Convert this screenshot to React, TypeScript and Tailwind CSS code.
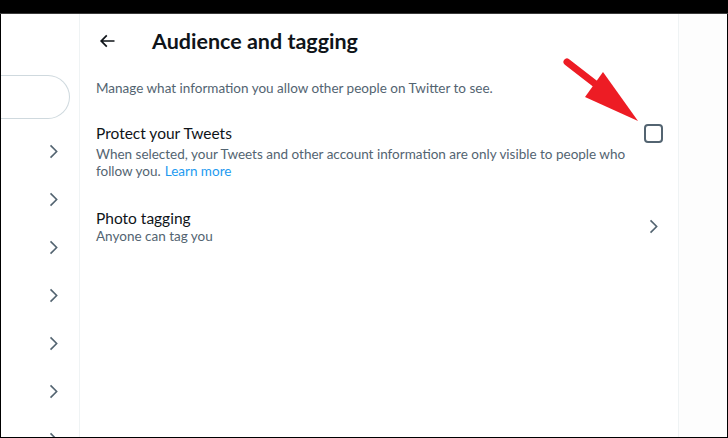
import React from "react";

const font = { fontFamily: 'Lato, "Noto Sans", Arial, sans-serif' };

function Chevron({ className = "" }: { className?: string }) {
  return (
    <svg viewBox="0 0 24 24" className={className} fill="#536471">
      <path d="M14.586 12L7.543 4.96l1.414-1.42L17.414 12l-8.457 8.46-1.414-1.42L14.586 12z" />
    </svg>
  );
}

function BackArrow() {
  return (
    <svg viewBox="0 0 24 24" className="h-5 w-5" fill="#0f1419">
      <path d="M7.414 13l5.043 5.04-1.414 1.42L3.586 12l7.457-7.46 1.414 1.42L7.414 11H21v2H7.414z" />
    </svg>
  );
}

function RedArrow() {
  return (
    <svg className="pointer-events-none absolute left-[560px] top-[50px]" width="90" height="80" viewBox="560 50 90 80">
      <line x1="567" y1="62" x2="598" y2="86" stroke="#ed1c24" strokeWidth="7" strokeLinecap="round" />
      <polygon points="603,72 585,97 638,121" fill="#ed1c24" />
    </svg>
  );
}

export default function App() {
  const chevrons = [0, 1, 2, 3, 4, 5, 6];
  return (
    <div className="relative flex h-[438px] w-[728px] flex-col overflow-hidden bg-black" style={font}>
      <div className="h-[14px] shrink-0 border-b border-[#3a3a3a]" />
      <div className="mb-[1px] ml-[1px] mr-[1px] flex min-h-0 flex-1 bg-white">
        {/* left settings list */}
        <div className="flex w-[79px] shrink-0 flex-col overflow-hidden border-r border-[#eff3f4]">
          <div className="mt-[61px] h-[44px] w-[69px] shrink-0 rounded-r-full border border-l-0 border-[#cfd9de]" />
          <div className="mt-[23px] flex shrink-0 flex-col items-end gap-[29px] pr-[16px]">
            {chevrons.map((i) => (
              <Chevron key={i} className="h-[19px] w-[19px] shrink-0" />
            ))}
          </div>
        </div>

        {/* main column */}
        <div className="flex w-[599px] shrink-0 flex-col border-r border-[#eff3f4]">
          <div className="flex h-[53px] items-center px-4">
            <div className="flex w-[56px] items-center pl-[1px]">
              <BackArrow />
            </div>
            <h1 className="text-[21.5px] font-bold leading-6 text-[#0f1419]">Audience and tagging</h1>
          </div>
          <p className="px-4 pt-[13px] text-[13.5px] leading-4 text-[#536471]">
            Manage what information you allow other people on Twitter to see.
          </p>
          <div className="flex items-start justify-between px-4 pt-[27px] pb-3">
            <div className="pr-2">
              <div className="text-[15.5px] leading-5 text-[#0f1419]">Protect your Tweets</div>
              <div className="mt-[3px] text-[13.5px] leading-[17px] text-[#536471]">
                <div>When selected, your Tweets and other account information are only visible to people who</div>
                <div className="flex gap-[4px]">
                  <span>follow you.</span>
                  <span className="text-[#1d9bf0]">Learn more</span>
                </div>
              </div>
            </div>
            <div className="mt-[1px] mr-[-1px] h-[19px] w-[19px] shrink-0 rounded-[4px] border-2 border-[#536471]" />
          </div>
          <div className="flex items-center justify-between px-4 pt-[16px]">
            <div>
              <div className="text-[15.5px] leading-5 text-[#0f1419]">Photo tagging</div>
              <div className="text-[13.5px] leading-4 text-[#536471]">Anyone can tag you</div>
            </div>
            <Chevron className="mr-[-1px] h-[19px] w-[19px]" />
          </div>
        </div>

        {/* right column */}
        <div className="flex-1 bg-[#fdfdfd]" />
      </div>
      <RedArrow />
    </div>
  );
}
